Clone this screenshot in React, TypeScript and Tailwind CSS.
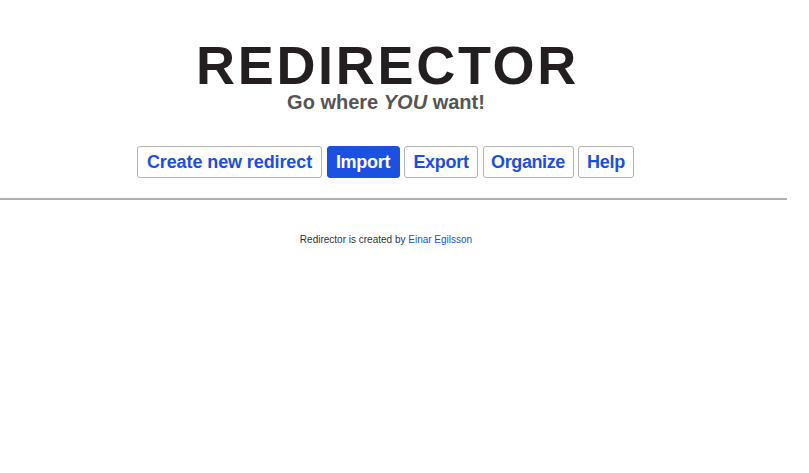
import React from "react";

const btn =
  "h-[32px] border border-[#b3b3b3] rounded-[3px] bg-white text-[#1b4fe3] text-[18px] font-bold leading-none flex items-center justify-center whitespace-nowrap";

export default function App() {
  return (
    <div className="w-[809px] h-[473px] bg-white" style={{ fontFamily: '"Liberation Sans", Arial, sans-serif' }}>
      <div className="w-[787px]">
        <div className="w-[772px] flex flex-col items-center pt-[38px]">
          <h1 className="text-[54px] font-bold leading-[54px] tracking-[2.7px] text-[#231f20] pl-[3px]">REDIRECTOR</h1>
          <p className="text-[20px] font-bold leading-[20px] text-[#555555] mt-[0px]">
            Go where <i>YOU</i> want!
          </p>
          <div className="flex gap-[4.5px] mt-[34px] pr-[1px]">
            <button className={`${btn} w-[185px] tracking-[-0.1px]`}>Create new redirect</button>
            <button className="w-[73px] h-[32px] border border-[#1b50e0] rounded-[3px] bg-[#1b50e0] text-white text-[18px] font-bold leading-none flex items-center justify-center tracking-[-0.3px]">Import</button>
            <button className={`${btn} w-[74px] tracking-[-0.3px]`}>Export</button>
            <button className={`${btn} w-[91px] tracking-[-0.4px]`}>Organize</button>
            <button className={`${btn} w-[56px] tracking-[-0.2px]`}>Help</button>
          </div>
        </div>
        <div className="h-[2px] bg-[#b0b0b0] mt-[20px]" />
        <div className="w-[772px] flex justify-center mt-[34px]">
          <p className="text-[10px] leading-[12px] text-[#333333]">
            Redirector is created by <span className="text-[#1b4fe3]">Einar Egilsson</span>
          </p>
        </div>
      </div>
    </div>
  );
}
